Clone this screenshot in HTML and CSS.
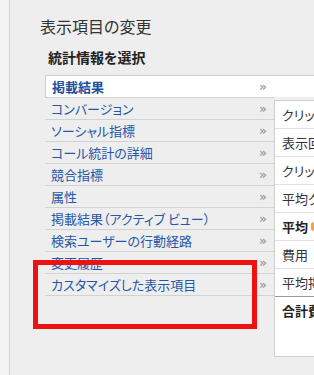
FILE: index.html
```html
<!DOCTYPE html>
<html>
	<head>
		<meta name="viewport" content="width=device-width,initial-scale=1.0">
		<title>表示項目の変更</title>
		<link rel="stylesheet" href="styles.css">
	</head>
	<body>
		<div class="screen">
			<div class="main">
				<h1 class="title">表示項目の変更</h1>
				<h2 class="subtitle">統計情報を選択</h2>

				<div class="picker">
					<div class="tab-active">
						<div class="tab-inner"><span>掲載結果</span><span class="arrow">»</span></div>
					</div>
					<div class="picker-body">
						<ul class="tab-list">
							<li class="tab"><span>コンバージョン</span><span class="arrow">»</span></li>
							<li class="tab"><span>ソーシャル指標</span><span class="arrow">»</span></li>
							<li class="tab"><span>コール統計の詳細</span><span class="arrow">»</span></li>
							<li class="tab"><span>競合指標</span><span class="arrow">»</span></li>
							<li class="tab"><span>属性</span><span class="arrow">»</span></li>
							<li class="tab"><span>掲載結果（アクティブ ビュー）</span><span class="arrow">»</span></li>
							<li class="tab"><span>検索ユーザーの行動経路</span><span class="arrow">»</span></li>
							<li class="tab"><span>変更履歴</span><span class="arrow">»</span></li>
							<li class="tab"><span>カスタマイズした表示項目</span><span class="arrow">»</span></li>
						</ul>
						<div class="columns">
							<div class="col">クリック数</div>
							<div class="col">表示回数</div>
							<div class="col">クリック率</div>
							<div class="col">平均クリック単価</div>
							<div class="col col-bold">平均 <span class="help"></span></div>
							<div class="col">費用</div>
							<div class="col">平均掲載順位</div>
							<div class="col col-bold col-total">合計費用</div>
						</div>
					</div>
				</div>
			</div>

			<!-- annotation box -->
			<div class="callout"></div>
		</div>
	</body>
</html>
```

FILE: styles.css
```css
body {
	margin: 0;
	background: #f4f4f4;
	font-family: "Noto Sans CJK JP", "Noto Sans", sans-serif;
	font-feature-settings: "palt"; /* proportional kana, like the original UI font */
	overflow: hidden;
}

.screen {
	position: relative;
	width: 314px;
	height: 375px;
	overflow: hidden;
}

.main {
	margin-left: 9px;
	height: 375px;
	border-left: 1px solid #d6d6d6;
	background: #eeeeee;
	padding-top: 16px;
	box-sizing: border-box;
}

.title {
	margin: 0 0 0 30px;
	font-size: 16px;
	line-height: 20px;
	font-weight: normal;
	color: #333;
}

.subtitle {
	margin: 12px 0 0 38px;
	font-size: 14px;
	line-height: 18px;
	font-weight: bold;
	color: #222;
}

.picker {
	margin: 9px 0 0 35px;
}

.arrow {
	font-family: "DejaVu Sans", sans-serif;
	font-size: 13px;
	font-weight: normal;
	color: #8c8c8c;
}

/* selected tab runs over the whole width */
.tab-active {
	background: #fff;
	border-top: 1px solid #cfcfcf;
	border-left: 1px solid #cfcfcf;
	height: 21px;
}

.tab-inner {
	width: 228px;
	height: 21px;
	display: flex;
	align-items: center;
	justify-content: space-between;
	padding: 0 7px 0 6px;
	box-sizing: border-box;
	font-size: 13px;
	font-weight: bold;
	color: #1d4f9e;
}

.picker-body {
	display: flex;
	align-items: flex-start;
}

.tab-list {
	list-style-type: none;
	margin: 0;
	padding: 0;
	width: 229px;
	flex-shrink: 0;
}

.tab {
	display: flex;
	align-items: center;
	justify-content: space-between;
	height: 21px;
	border-top: 1px solid #d2d2d2;
	padding: 0 7px 0 6px;
	font-size: 13px;
	color: #2457a8;
	white-space: nowrap;
}

.tab:last-child {
	border-bottom: 1px solid #d2d2d2;
}

.columns {
	flex-grow: 1;
	margin-top: 3px;
	height: 257px;
	background: #fff;
	border: 1px solid #d0d0d0;
	border-right: none;
	box-sizing: border-box;
	overflow: hidden;
}

.col {
	height: 27px;
	display: flex;
	align-items: center;
	padding-left: 7px;
	border-bottom: 1px solid #e0e0e0;
	font-size: 13px;
	color: #333;
	white-space: nowrap;
}

.col-bold {
	font-weight: bold;
	color: #222;
}

.col:nth-child(7) {
	border-bottom-color: #9a9a9a;
}

.col-total {
	border-bottom: none;
}

.help {
	display: inline-block;
	width: 9px;
	height: 9px;
	margin-left: 3px;
	border-radius: 50%;
	background: #f0a040;
}

.callout {
	position: absolute;
	left: 33px;
	top: 260px;
	width: 224px;
	height: 69px;
	border: 5px solid #ee1111;
	box-sizing: border-box;
}
```
